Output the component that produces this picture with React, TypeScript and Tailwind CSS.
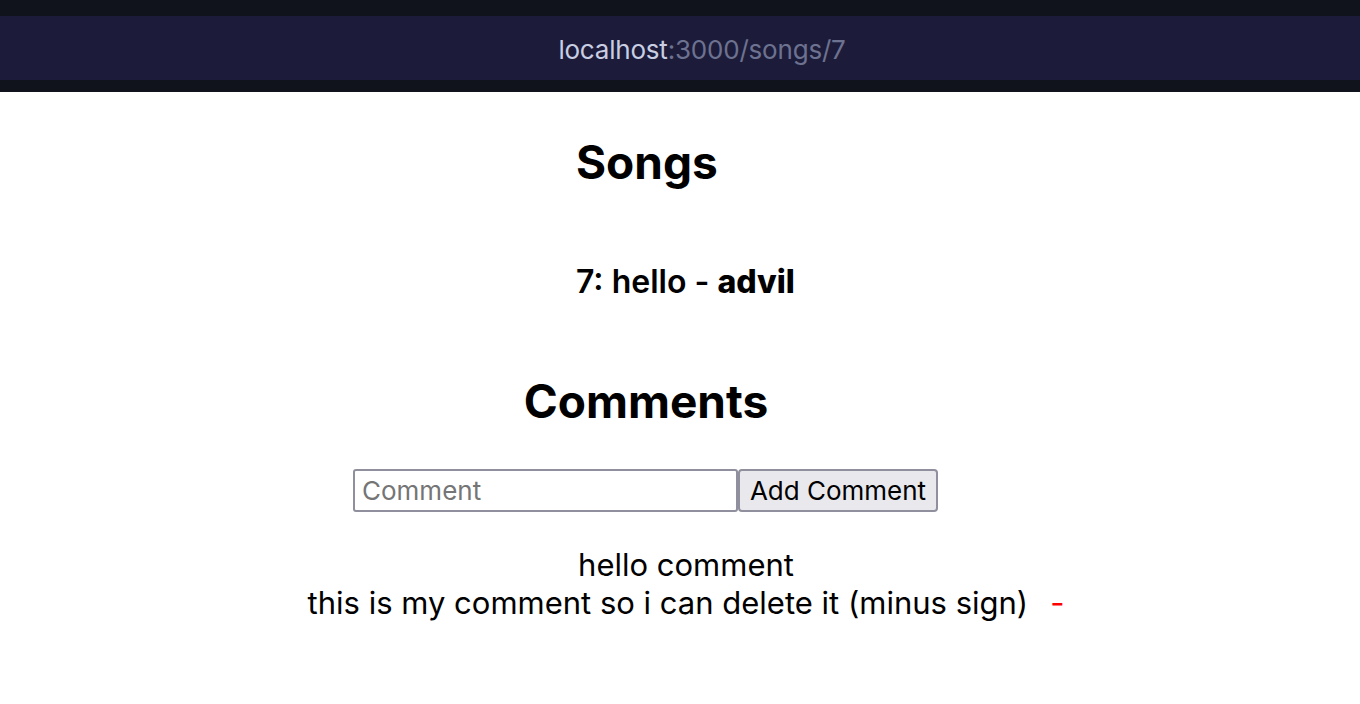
import { useState } from 'react';

type Comment = { id: number; text: string; mine?: boolean };

const App = () => {
  const [comment, setComment] = useState('');
  const [comments, setComments] = useState<Comment[]>([
    { id: 1, text: 'hello comment' },
    { id: 2, text: 'this is my comment so i can delete it (minus sign)', mine: true },
  ]);

  // add a comment to the list
  const handleAdd = (e: React.FormEvent) => {
    e.preventDefault();
    if (!comment.trim()) return;
    setComments([...comments, { id: Date.now(), text: comment, mine: true }]);
    setComment('');
  };

  const handleDelete = (id: number) => {
    setComments(comments.filter((c) => c.id !== id));
  };

  return (
    <div className="min-h-[704px] bg-white text-black font-['Inter','Liberation_Sans',sans-serif]">
      {/* browser address bar */}
      <div className="bg-[#10131b] pt-[16px] pb-[12px]">
        <div className="h-[64px] bg-[#1c1c3a] flex items-center justify-center pl-[44px] pt-[3px]">
          <span className="text-[26px] tracking-[-0.2px]">
            <span className="text-[#c9cee2]">localhost</span>
            <span className="text-[#6d7290]">:3000/songs/7</span>
          </span>
        </div>
      </div>

      {/* songs */}
      <div className="pl-[576px] pt-[47px]">
        <h1 className="text-[46px] leading-none font-bold">Songs</h1>
        <div className="mt-[81px] text-[32px] leading-none font-semibold">
          7: hello - <b className="font-extrabold">advil</b>
        </div>
      </div>

      {/* comments */}
      <div className="pr-[68px] mt-[80px] text-center">
        <h1 className="text-[46px] leading-none font-bold">Comments</h1>
      </div>

      <form onSubmit={handleAdd} className="mt-[45px] pl-[353px] flex">
        <input
          type="text"
          placeholder="Comment"
          value={comment}
          onChange={(e) => setComment(e.target.value)}
          className="w-[385px] h-[43px] border-2 border-[#8f8f9d] rounded-[3px] px-[7px] text-[26px] placeholder:text-[#757575] outline-none"
        />
        <button
          type="submit"
          className="w-[200px] h-[43px] border-2 border-[#8f8f9d] rounded-[4px] bg-[#e9e9ed] text-[26px] leading-none"
        >
          Add Comment
        </button>
      </form>

      <ul className="mt-[34px] pl-[12px] text-center text-[31px] leading-[38px]">
        {comments.map((c) => (
          <li key={c.id}>
            {c.text}
            {c.mine && (
              <button
                onClick={() => handleDelete(c.id)}
                className="ml-[22px] text-[#ff0000]"
              >
                -
              </button>
            )}
          </li>
        ))}
      </ul>
    </div>
  );
};

export default App;
